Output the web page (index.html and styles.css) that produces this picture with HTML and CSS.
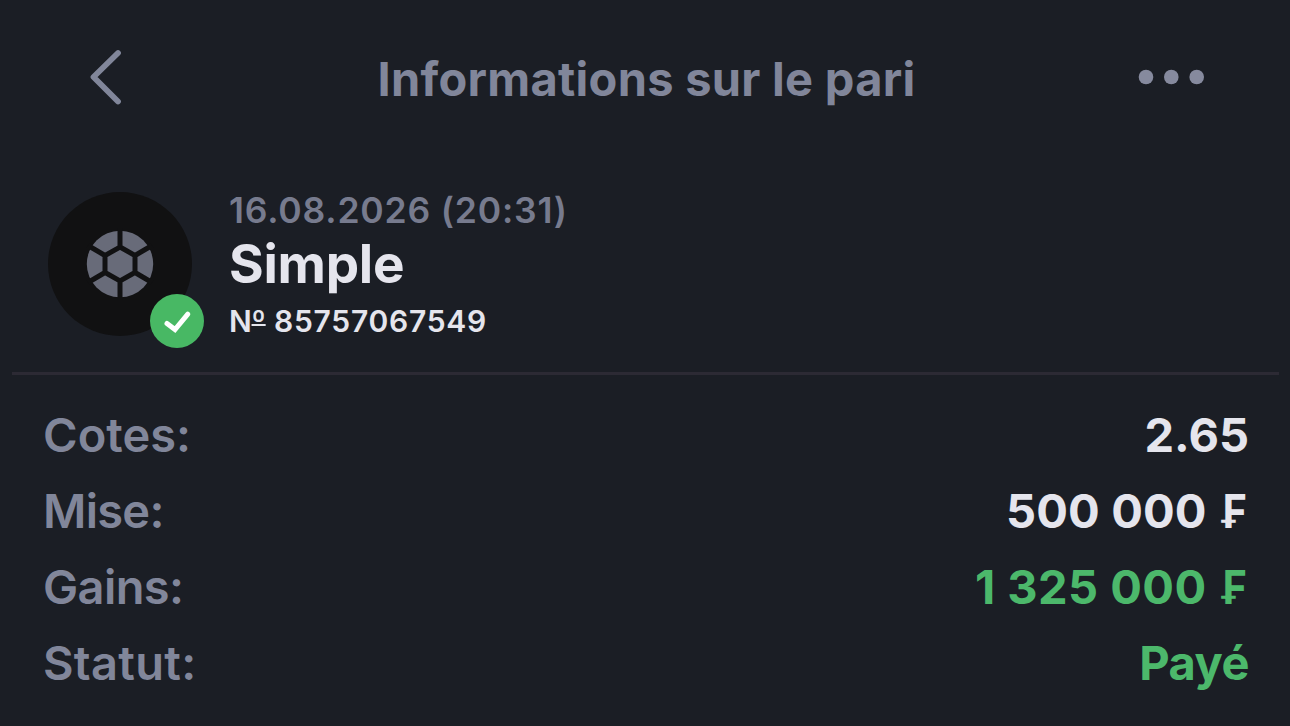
FILE: index.html
```html
<!DOCTYPE html>
<html lang="fr">
<head>
<meta charset="utf-8">
<title>Informations sur le pari</title>
<link rel="stylesheet" href="styles.css">
</head>
<body>
<main class="screen">
  <header class="header">
    <svg class="back" viewBox="0 0 36 60" fill="none"><path d="M31 6 6.500 30 31 54.500"/></svg>
    <h1 class="title">Informations sur le pari</h1>
    <svg class="more" viewBox="0 0 68 16"><circle cx="8" cy="8" r="7.300"/><circle cx="33.300" cy="8" r="7.300"/><circle cx="58.700" cy="8" r="7.300"/></svg>
  </header>
  <section class="bet">
    <div class="avatar">
      <svg class="ball" viewBox="-36 -36 72 72">
        <circle class="ball-fill" r="33.200"/>
        <path class="ball-seam" d="M0-17 15-8.500V8.500L0 17-15 8.500V-8.500ZM0-17V-36M15-8.500 32-18.500M15 8.500 32 18.500M0 17V36M-15 8.500-32 18.500M-15-8.500-32-18.500"/>
      </svg>
      <svg class="badge" viewBox="0 0 54 54" fill="none"><circle cx="27" cy="27" r="27"/><path d="m17 29.500 8 6L37.800 20.200"/></svg>
    </div>
    <div class="details">
      <div class="date">16.08.2026 (20:31)</div>
      <div class="type">Simple</div>
      <div class="number">N<span class="ordinal">º</span> 85757067549</div>
    </div>
  </section>
  <dl class="rows">
    <div class="row"><dt>Cotes:</dt><dd class="odds">2.65</dd></div>
    <div class="row"><dt class="mise">Mise:</dt><dd class="stake">500 000 <span class="currency">₣</span></dd></div>
    <div class="row"><dt class="gains">Gains:</dt><dd class="positive payout">1 325 000 <span class="currency">₣</span></dd></div>
    <div class="row"><dt class="statut">Statut:</dt><dd class="positive status">Payé</dd></div>
  </dl>
</main>
</body>
</html>
```
FILE: styles.css
```css
* { box-sizing: border-box; }
body { margin: 0; background: #1b1e25; font-family: Inter, "Liberation Sans", sans-serif; color: #e5e5ed; }
.screen { height: 726px; overflow: hidden; }
.header { height: 156px; padding: 0 84px 0 87px; display: grid; grid-template-columns: 68px 1fr 68px; align-items: center; }
.back { width: 36px; height: 60px; margin-bottom: 2px; }
.back path { stroke: #81869a; stroke-width: 5.800; stroke-linecap: round; stroke-linejoin: round; }
.title { margin: 0; padding-top: 1px; text-align: center; font-size: 47px; line-height: 60px; font-weight: 700; letter-spacing: .27px; color: #81869a; white-space: nowrap; }
.more { width: 68px; height: 16px; fill: #868a9e; margin-bottom: 2px; }
.bet { height: 216px; padding: 35.500px 48px 0; display: flex; gap: 37px; }
.avatar { position: relative; width: 144px; height: 144px; border-radius: 50%; background: #111112; display: flex; align-items: center; justify-content: center; }
.ball { width: 72px; height: 72px; }
.ball-fill { fill: #686b79; }
.ball-seam { fill: none; stroke: #111112; stroke-width: 5; }
.badge { position: absolute; left: 102px; top: 102.500px; width: 54px; height: 54px; }
.badge circle { fill: #48b864; }
.badge path { stroke: #fff; stroke-width: 5; stroke-linecap: round; stroke-linejoin: miter; }
.date { font-size: 35.500px; line-height: 38px; font-weight: 600; letter-spacing: .800px; color: #777b8e; }
.type { font-size: 53px; line-height: 69px; font-weight: 700; letter-spacing: -.250px; }
.number { font-size: 30px; line-height: 45px; font-weight: 600; letter-spacing: .750px; }
.ordinal { text-decoration: underline; text-decoration-thickness: 2px; text-underline-offset: -8px; text-decoration-skip-ink: none; letter-spacing: 0; margin-left: -1px; }
.rows { margin: 0 11px 0 12px; padding: 22px 30px 0 31px; border-top: 3px solid #2c2a34; }
.row { height: 76px; display: flex; align-items: center; justify-content: space-between; font-size: 47px; line-height: 76px; }
dt { font-weight: 600; color: #81869a; }
dd { margin: 0; font-weight: 700; white-space: nowrap; }
.mise { letter-spacing: -.700px; }
.gains { letter-spacing: -.600px; }
.statut { letter-spacing: .300px; }
.stake { letter-spacing: .150px; padding-right: 2px; }
.payout { letter-spacing: .450px; padding-right: 1.500px; }
.status { letter-spacing: -.500px; }
.currency { display: inline-block; transform: scaleX(.880); transform-origin: right center; }
.positive { color: #4cb86b; }
```
